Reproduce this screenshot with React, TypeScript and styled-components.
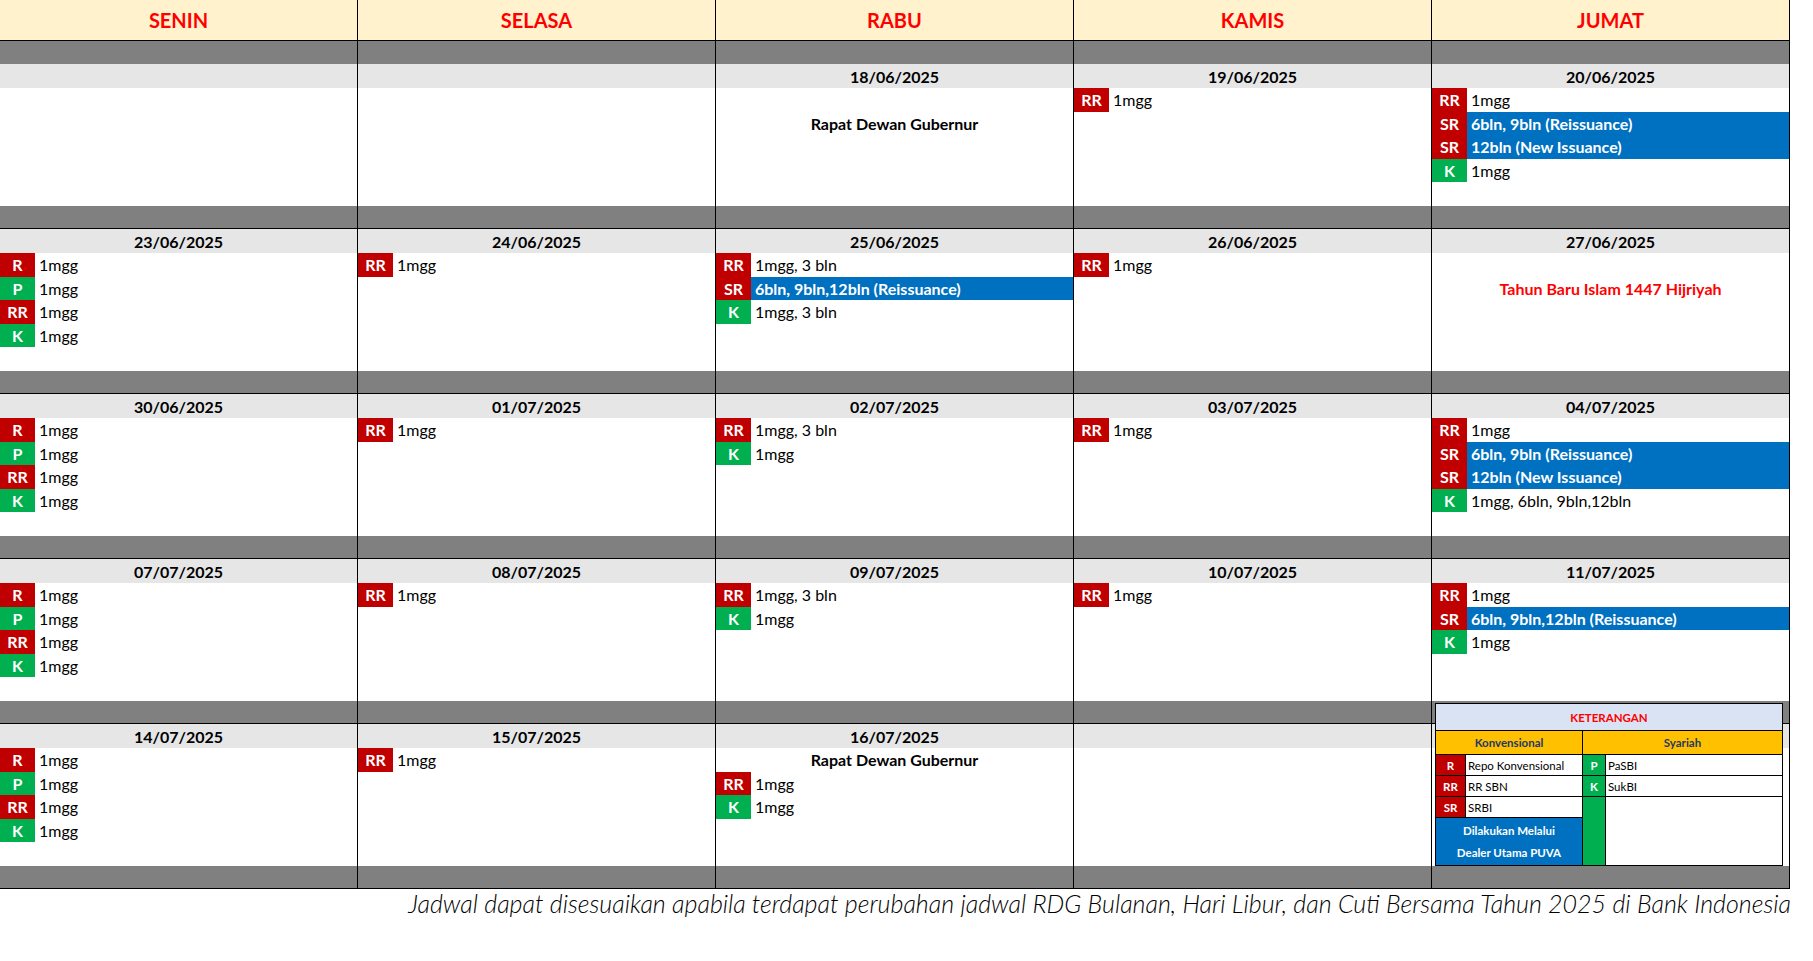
import React from "react";
import styled, { createGlobalStyle, css } from "styled-components";

const Global = createGlobalStyle`
  html, body { margin: 0; padding: 0; background: #fff; }
  body { font-family: Lato, "Open Sans", sans-serif; color: #000; }
`;

type Line =
  | { t: "b"; code: string; text: string; hi?: boolean }
  | { t: "n"; text: string; red?: boolean }
  | { t: "e" };

interface Day { date?: string; lines: Line[]; legend?: boolean }

const b = (code: string, text: string, hi = false): Line => ({ t: "b", code, text, hi });
const n = (text: string, red = false): Line => ({ t: "n", text, red });
const e: Line = { t: "e" };

const std = [b("R", "1mgg"), b("P", "1mgg"), b("RR", "1mgg"), b("K", "1mgg")];

const weeks: Day[][] = [
  [
    { lines: [] },
    { lines: [] },
    { date: "18/06/2025", lines: [e, n("Rapat Dewan Gubernur")] },
    { date: "19/06/2025", lines: [b("RR", "1mgg")] },
    { date: "20/06/2025", lines: [b("RR", "1mgg"), b("SR", "6bln, 9bln (Reissuance)", true), b("SR", "12bln (New Issuance)", true), b("K", "1mgg")] },
  ],
  [
    { date: "23/06/2025", lines: std },
    { date: "24/06/2025", lines: [b("RR", "1mgg")] },
    { date: "25/06/2025", lines: [b("RR", "1mgg, 3 bln"), b("SR", "6bln, 9bln,12bln (Reissuance)", true), b("K", "1mgg, 3 bln")] },
    { date: "26/06/2025", lines: [b("RR", "1mgg")] },
    { date: "27/06/2025", lines: [e, n("Tahun Baru Islam 1447 Hijriyah", true)] },
  ],
  [
    { date: "30/06/2025", lines: std },
    { date: "01/07/2025", lines: [b("RR", "1mgg")] },
    { date: "02/07/2025", lines: [b("RR", "1mgg, 3 bln"), b("K", "1mgg")] },
    { date: "03/07/2025", lines: [b("RR", "1mgg")] },
    { date: "04/07/2025", lines: [b("RR", "1mgg"), b("SR", "6bln, 9bln (Reissuance)", true), b("SR", "12bln (New Issuance)", true), b("K", "1mgg, 6bln, 9bln,12bln")] },
  ],
  [
    { date: "07/07/2025", lines: std },
    { date: "08/07/2025", lines: [b("RR", "1mgg")] },
    { date: "09/07/2025", lines: [b("RR", "1mgg, 3 bln"), b("K", "1mgg")] },
    { date: "10/07/2025", lines: [b("RR", "1mgg")] },
    { date: "11/07/2025", lines: [b("RR", "1mgg"), b("SR", "6bln, 9bln,12bln (Reissuance)", true), b("K", "1mgg")] },
  ],
  [
    { date: "14/07/2025", lines: std },
    { date: "15/07/2025", lines: [b("RR", "1mgg")] },
    { date: "16/07/2025", lines: [n("Rapat Dewan Gubernur"), b("RR", "1mgg"), b("K", "1mgg")] },
    { lines: [] },
    { lines: [], legend: true },
  ],
];

const RED = "#c00000";
const GREEN = "#00b050";
const BLUE = "#0070c0";

const Page = styled.div`
  width: 1791px;
`;

const Grid = styled.div`
  display: grid;
  grid-template-columns: repeat(5, 358px);
`;

const HeadCell = styled.div`
  height: 40px;
  background: #fff2cc;
  border-bottom: 1px solid #000;
  border-right: 1px solid #000;
  display: flex;
  align-items: center;
  justify-content: center;
  color: #ff0000;
  font-weight: 700;
  font-size: 20px;
`;

const Col = styled.div`
  border-right: 1px solid #000;
  display: flex;
  flex-direction: column;
  position: relative;
`;

const GrayBar = styled.div<{ $line?: boolean }>`
  height: 23px;
  background: #808080;
  border-bottom: ${(p) => (p.$line ? "1px solid #000" : "none")};
  box-sizing: border-box;
`;

const DateRow = styled.div`
  height: 24px;
  background: #e6e6e6;
  display: flex;
  align-items: center;
  justify-content: center;
  font-weight: 700;
  font-size: 16px;
`;

const Content = styled.div`
  height: 118px;
  background: #fff;
  display: flex;
  flex-direction: column;
`;

const Row = styled.div<{ $hi?: boolean }>`
  height: 23.5px;
  flex: none;
  display: flex;
  align-items: stretch;
  font-size: 16px;
  background: ${(p) => (p.$hi ? BLUE : "transparent")};
  color: ${(p) => (p.$hi ? "#fff" : "#000")};
  font-weight: ${(p) => (p.$hi ? 700 : 400)};
`;

const Badge = styled.span<{ $green?: boolean }>`
  width: 35px;
  flex: none;
  background: ${(p) => (p.$green ? GREEN : RED)};
  color: #fff;
  font-weight: 700;
  display: flex;
  align-items: center;
  justify-content: center;
`;

const RowText = styled.span`
  padding-left: 4px;
  display: flex;
  align-items: center;
`;

const Note = styled.div<{ $red?: boolean }>`
  height: 23.5px;
  flex: none;
  display: flex;
  align-items: center;
  justify-content: center;
  font-weight: 700;
  font-size: 16px;
  color: ${(p) => (p.$red ? "#ff0000" : "#000")};
`;

const Empty = styled.div`
  height: 23.5px;
  flex: none;
`;

const Footer = styled.div`
  text-align: right;
  font-style: italic;
  font-weight: 300;
  font-size: 25px;
  line-height: 28px;
  color: #000;
`;

/* legend */
const Legend = styled.div`
  position: absolute;
  top: 2px;
  left: 3px;
  right: 6px;
  height: 163px;
  box-sizing: border-box;
  background: #000;
  padding: 1px;
  display: grid;
  grid-template-columns: 29px 116px 22px 1fr;
  grid-template-rows: 26px 23px 20px 20px 20px 23px 23px;
  gap: 1px;
  font-size: 11.5px;
  z-index: 2;
`;

const LCell = styled.div<{ $bg?: string; $color?: string; $bold?: boolean; $center?: boolean; $area?: string }>`
  background: ${(p) => p.$bg || "#fff"};
  color: ${(p) => p.$color || "#000"};
  font-weight: ${(p) => (p.$bold ? 700 : 400)};
  display: flex;
  align-items: center;
  justify-content: ${(p) => (p.$center ? "center" : "flex-start")};
  padding-left: ${(p) => (p.$center ? "0" : "2px")};
  ${(p) => p.$area && css`grid-area: ${p.$area};`}
`;

const BlueNote = styled.div`
  grid-area: 6 / 1 / 8 / 3;
  background: ${BLUE};
  color: #fff;
  font-weight: 700;
  display: flex;
  flex-direction: column;
  justify-content: space-around;
  align-items: center;
  padding: 2px 0;
`;

const LegendBox = () => (
  <Legend>
    <LCell $area="1 / 1 / 2 / 5" $bg="#dae3f3" $color="#ff0000" $bold $center>KETERANGAN</LCell>
    <LCell $area="2 / 1 / 3 / 3" $bg="#ffc000" $color="#1f3864" $bold $center>Konvensional</LCell>
    <LCell $area="2 / 3 / 3 / 5" $bg="#ffc000" $color="#1f3864" $bold $center>Syariah</LCell>
    <LCell $bg={RED} $color="#fff" $bold $center>R</LCell>
    <LCell>Repo Konvensional</LCell>
    <LCell $bg={GREEN} $color="#fff" $bold $center>P</LCell>
    <LCell>PaSBI</LCell>
    <LCell $bg={RED} $color="#fff" $bold $center>RR</LCell>
    <LCell>RR SBN</LCell>
    <LCell $bg={GREEN} $color="#fff" $bold $center>K</LCell>
    <LCell>SukBI</LCell>
    <LCell $bg={RED} $color="#fff" $bold $center>SR</LCell>
    <LCell>SRBI</LCell>
    <LCell $area="5 / 3 / 8 / 4" $bg={GREEN} />
    <LCell $area="5 / 4 / 8 / 5" />
    <BlueNote>
      <span>Dilakukan Melalui</span>
      <span>Dealer Utama PUVA</span>
    </BlueNote>
  </Legend>
);

const renderLine = (l: Line, i: number) => {
  if (l.t === "e") return <Empty key={i} />;
  if (l.t === "n") return <Note key={i} $red={l.red}>{l.text}</Note>;
  return (
    <Row key={i} $hi={l.hi}>
      <Badge $green={l.code === "P" || l.code === "K"}>{l.code}</Badge>
      <RowText>{l.text}</RowText>
    </Row>
  );
};

const days = ["SENIN", "SELASA", "RABU", "KAMIS", "JUMAT"];

export default function App() {
  return (
    <Page>
      <Global />
      <Grid>
        {days.map((d) => (
          <HeadCell key={d}>{d}</HeadCell>
        ))}
        {weeks.map((w, wi) =>
          w.map((day, di) => (
            <Col key={`${wi}-${di}`}>
              <GrayBar $line={wi > 0} />
              <DateRow>{day.date ?? ""}</DateRow>
              <Content>{day.lines.map(renderLine)}</Content>
              {wi === weeks.length - 1 && <GrayBar $line />}
              {day.legend && <LegendBox />}
            </Col>
          ))
        )}
      </Grid>
      <Footer>
        Jadwal dapat disesuaikan apabila terdapat perubahan jadwal RDG Bulanan, Hari Libur, dan Cuti Bersama Tahun 2025 di Bank Indonesia
      </Footer>
    </Page>
  );
}
